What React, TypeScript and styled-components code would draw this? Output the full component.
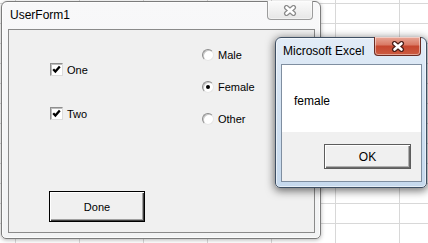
import React from "react";
import styled, { createGlobalStyle } from "styled-components";

const GlobalStyle = createGlobalStyle`
  html, body {
    margin: 0;
    padding: 0;
  }
  body {
    font-family: "Liberation Sans", Arial, sans-serif;
    overflow: hidden;
  }
`;

const Desktop = styled.div`
  position: relative;
  width: 428px;
  height: 243px;
  overflow: hidden;
  background-color: #fff;
  background-image: linear-gradient(to right, #d8d8d8 1px, transparent 1px),
    linear-gradient(to bottom, #d8d8d8 1px, transparent 1px);
  background-size: 64px 20px;
  background-position: 15px 3px;
`;

const Window = styled.div<{
  $active?: boolean;
  $left: number;
  $top: number;
  $width: number;
  $height: number;
}>`
  position: absolute;
  left: ${(p) => p.$left}px;
  top: ${(p) => p.$top}px;
  width: ${(p) => p.$width}px;
  height: ${(p) => p.$height}px;
  box-sizing: border-box;
  display: flex;
  flex-direction: column;
  border: 1px solid ${(p) => (p.$active ? "#3e4f63" : "#7c7c7c")};
  border-radius: 6px 6px 5px 5px;
  background: ${(p) =>
    p.$active
      ? "linear-gradient(180deg, #e2ecf7 0%, #d2e1f1 45%, #c6d9ed 100%)"
      : "linear-gradient(180deg, #f8f8f9 0%, #f2f3f4 100%)"};
  box-shadow: ${(p) =>
    p.$active
      ? "0 2px 9px 1px rgba(0, 0, 0, 0.55), inset 0 0 0 1px rgba(255, 255, 255, 0.55)"
      : "0 1px 4px rgba(0, 0, 0, 0.3), inset 0 0 0 1px rgba(255, 255, 255, 0.7)"};
`;

const TitleBar = styled.div<{ $height: number; $padLeft: number; $closeRight: number }>`
  display: flex;
  align-items: flex-start;
  height: ${(p) => p.$height}px;
  padding-left: ${(p) => p.$padLeft}px;
  padding-right: ${(p) => p.$closeRight}px;
  flex-shrink: 0;
`;

const Title = styled.span`
  padding-top: 5px;
  font-size: 12px;
  line-height: 16px;
  color: #000;
`;

const CloseButton = styled.div<{ $active?: boolean; $width: number; $height: number }>`
  margin-left: auto;
  margin-top: -1px;
  width: ${(p) => p.$width}px;
  height: ${(p) => p.$height}px;
  box-sizing: border-box;
  display: flex;
  align-items: center;
  justify-content: center;
  border: 1px solid ${(p) => (p.$active ? "#6a2b22" : "#9c9c9c")};
  border-top: none;
  border-radius: 0 0 4px 4px;
  background: ${(p) =>
    p.$active
      ? "linear-gradient(180deg, #e8a898 0%, #da7b66 42%, #c6472f 52%, #cc5b40 100%)"
      : "linear-gradient(180deg, #fbfbfb 0%, #f1f1f1 50%, #e6e6e6 100%)"};
  box-shadow: inset 0 0 0 1px rgba(255, 255, 255, 0.45);
`;

const XGlyph = ({ outline }: { outline: string }) => (
  <svg width="14" height="11" viewBox="0 0 14 11">
    <path d="M3.5 2.5 L10.5 8.5 M10.5 2.5 L3.5 8.5" stroke={outline} strokeWidth="5" strokeLinecap="round" />
    <path d="M3.5 2.5 L10.5 8.5 M10.5 2.5 L3.5 8.5" stroke="#fff" strokeWidth="2.6" strokeLinecap="round" />
  </svg>
);

/* ---------- UserForm1 ---------- */

const FormClient = styled.div`
  flex: 1;
  margin: 0 5px 5px 6px;
  border: 1px solid #8a8a8a;
  background: #f0f0f0;
  display: grid;
  grid-template-columns: 193px 1fr;
  font-size: 11px;
  color: #000;
`;

const LeftColumn = styled.div`
  display: flex;
  flex-direction: column;
  padding: 33px 0 10px 40px;
`;

const RightColumn = styled.div`
  display: flex;
  flex-direction: column;
  gap: 19px;
  padding-top: 18px;
`;

const CheckRow = styled.label<{ $gapAfter?: number }>`
  display: flex;
  align-items: center;
  gap: 4px;
  height: 13px;
  margin-left: 1px;
  margin-bottom: ${(p) => p.$gapAfter ?? 0}px;
`;

const CheckBox = styled.span`
  width: 13px;
  height: 13px;
  box-sizing: border-box;
  display: flex;
  align-items: center;
  justify-content: center;
  background: #fff;
  border: 1px solid;
  border-color: #8e8e8e #dcdcdc #dcdcdc #8e8e8e;
  box-shadow: inset 1px 1px 0 #bdbdbd;
`;

const RadioRow = styled.label`
  display: flex;
  align-items: center;
  gap: 4px;
  height: 13px;
`;

const RadioCircle = styled.span`
  width: 12px;
  height: 12px;
  box-sizing: border-box;
  border-radius: 50%;
  display: flex;
  align-items: center;
  justify-content: center;
  background: #fff;
  border: 1px solid;
  border-color: #8c8c8c #e6e6e6 #e6e6e6 #8c8c8c;
  box-shadow: inset 1px 1px 0 #c8c8c8;
`;

const RadioDot = styled.span`
  width: 4px;
  height: 4px;
  border-radius: 50%;
  background: #000;
`;

const ClassicButton = styled.button<{ $width: number; $height: number }>`
  width: ${(p) => p.$width}px;
  height: ${(p) => p.$height}px;
  box-sizing: border-box;
  padding: 0;
  border: 1px solid #000;
  background: #f0f0f0;
  box-shadow: inset 1px 1px 0 #fff, inset -1px -1px 0 #404040, inset -2px -2px 0 #a0a0a0;
  font-family: "Liberation Sans", Arial, sans-serif;
  font-size: 11px;
  color: #000;
`;

const DoneButton = styled(ClassicButton)`
  margin-top: auto;
`;

const CheckMark = () => (
  <svg width="9" height="9" viewBox="0 0 9 9">
    <polyline points="1.2,4.2 3.4,6.6 7.8,1.6" fill="none" stroke="#000" strokeWidth="2.3" />
  </svg>
);

/* ---------- Microsoft Excel msgbox ---------- */

const MsgClient = styled.div`
  flex: 1;
  margin: 0 4px 5px 5px;
  border: 1px solid #7f8ea0;
  display: flex;
  flex-direction: column;
`;

const MsgBody = styled.div`
  height: 67px;
  background: #fff;
  padding: 29px 0 0 12px;
  box-sizing: border-box;
  font-size: 12px;
  line-height: 14px;
  color: #000;
`;

const MsgFooter = styled.div`
  flex: 1;
  background: #f0f0f0;
  display: flex;
  justify-content: flex-end;
  align-items: flex-start;
  padding: 12px 10px 0 0;
`;

const OkButton = styled(ClassicButton)`
  border-color: #5c5c5c;
  box-shadow: inset 1px 1px 0 #fff, inset -1px -1px 0 #6a6a6a, inset -2px -2px 0 #b0b0b0;
  font-size: 12px;
`;

const radios = [
  { label: "Male", checked: false },
  { label: "Female", checked: true },
  { label: "Other", checked: false },
];

const App = () => {
  return (
    <>
      <GlobalStyle />
      <Desktop>
        <Window $left={1} $top={1} $width={320} $height={238}>
          <TitleBar $height={27} $padLeft={8} $closeRight={7}>
            <Title>UserForm1</Title>
            <CloseButton $width={46} $height={19}>
              <XGlyph outline="#8a8a8a" />
            </CloseButton>
          </TitleBar>
          <FormClient>
            <LeftColumn>
              <CheckRow $gapAfter={31}>
                <CheckBox>
                  <CheckMark />
                </CheckBox>
                One
              </CheckRow>
              <CheckRow>
                <CheckBox>
                  <CheckMark />
                </CheckBox>
                Two
              </CheckRow>
              <DoneButton $width={96} $height={31}>Done</DoneButton>
            </LeftColumn>
            <RightColumn>
              {radios.map((r) => (
                <RadioRow key={r.label}>
                  <RadioCircle>{r.checked && <RadioDot />}</RadioCircle>
                  {r.label}
                </RadioRow>
              ))}
            </RightColumn>
          </FormClient>
        </Window>

        <Window $active $left={275} $top={37} $width={152} $height={151}>
          <TitleBar $height={26} $padLeft={7} $closeRight={5}>
            <Title>Microsoft Excel</Title>
            <CloseButton $active $width={47} $height={19}>
              <XGlyph outline="#4a1e18" />
            </CloseButton>
          </TitleBar>
          <MsgClient>
            <MsgBody>female</MsgBody>
            <MsgFooter>
              <OkButton $width={87} $height={25}>OK</OkButton>
            </MsgFooter>
          </MsgClient>
        </Window>
      </Desktop>
    </>
  );
};

export default App;
